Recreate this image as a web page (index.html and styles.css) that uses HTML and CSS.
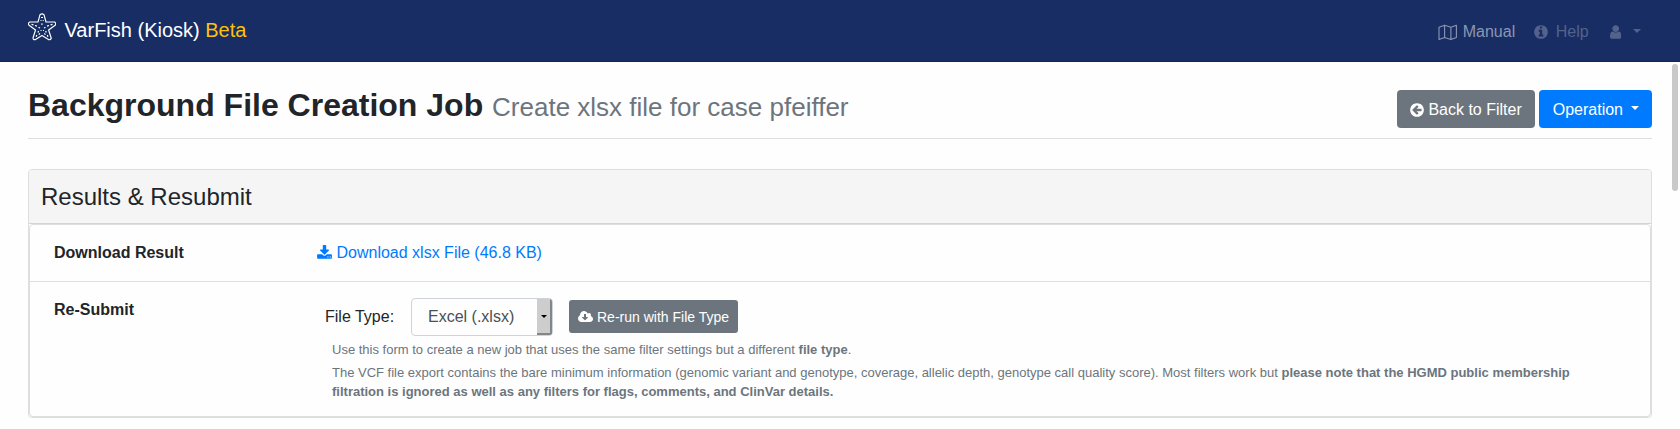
FILE: index.html
```html
<!DOCTYPE html>
<html lang="en">
<head>
<meta charset="utf-8">
<title>VarFish (Kiosk)</title>
<link rel="stylesheet" href="styles.css">
</head>
<body>
<nav class="navbar">
  <a class="brand">
    <svg class="logo" viewBox="0 0 28 28" fill="none" stroke="#fff" stroke-linejoin="round">
      <path stroke-width="1.150" d="M12 1.700q2-1.700 4 0l2 7.300h8.500q2 1.300 .7 3.200l-6.600 4.800 2.700 8.300q-.8 2-2.800 1.300l-6.500-4-6.500 4q-2.300 .5-2.500-1.600l2.500-8-6.500-4.800q-1.400-2 .7-3.200h8.300z"/>
      <path stroke-width="1.200" d="M13 4.500h2M12.500 7.500h1M14.700 7.500h1M3.500 11.300l2 .5M7 12.500l2 .6M24.500 11.300l-2 .5M21 12.500l-2 .6M10.500 14.500l1.500 .4M17.500 14.500l-1.500 .4M12.500 17.500h1M15 17.500h1M10.500 18l-.5 1.500M17.700 18l.5 1.500M8.800 22l-.6 1.800M19.300 22l.6 1.800M12 20.500l-1.300 1M16.200 20.500l1.300 1"/>
      <path stroke-width="1.800" stroke-opacity=".6" d="M13 11.200h1.800"/>
    </svg>
    <span>VarFish (Kiosk) <span class="beta">Beta</span></span>
  </a>
  <div class="menu">
    <a class="menu-item manual">
      <svg class="map" viewBox="0 0 20 17" fill="none" stroke="currentColor" stroke-width="1.100" stroke-linejoin="round"><path d="M1 3.200l5.600-2 6.300 2 5.500-2v12.400l-5.500 2-6.300-2-5.600 2zM6.600 1.200v12.400M12.900 3.200v12.400"/></svg>
      <span>Manual</span>
    </a>
    <a class="menu-item help">
      <svg class="icon icon-round" viewBox="128 0 1536 1792"><path d="M1152 1376v-160q0-14-9-23t-23-9h-96v-512q0-14-9-23t-23-9h-320q-14 0-23 9t-9 23v160q0 14 9 23t23 9h96v320h-96q-14 0-23 9t-9 23v160q0 14 9 23t23 9h448q14 0 23-9t9-23zm-128-896v-160q0-14-9-23t-23-9h-192q-14 0-23 9t-9 23v160q0 14 9 23t23 9h192q14 0 23-9t9-23zm640 416q0 209-103 385.500t-279.500 279.500-385.500 103-385.500-103-279.500-279.500-103-385.500 103-385.500 279.500-279.500 385.500-103 385.500 103 279.500 279.500 103 385.500z"/></svg>
      <span>Help</span>
    </a>
    <a class="menu-item user">
      <svg class="icon icon-user" viewBox="256 0 1280 1792"><path d="M1536 1399q0 109-62.500 187t-150.500 78h-854q-88 0-150.500-78t-62.500-187q0-85 8.500-160.500t31.500-152 58.500-131 94-89 134.500-34.500q131 128 313 128t313-128q76 0 134.500 34.500t94 89 58.500 131 31.500 152 8.500 160.500zm-256-887q0 159-112.500 271.500t-271.500 112.500-271.500-112.500-112.500-271.500 112.500-271.500 271.500-112.500 271.500 112.500 112.500 271.500z"/></svg>
      <span class="caret"></span>
    </a>
  </div>
</nav>
<div class="scroll-thumb"></div>
<main class="content">
  <header class="page-header">
    <h2 class="title">Background File Creation Job <small>Create xlsx file for case pfeiffer</small></h2>
    <div class="actions">
      <a class="btn btn-lower btn-secondary">
        <svg class="icon icon-round" viewBox="128 0 1536 1792"><path d="M1408 960v-128q0-26-19-45t-45-19h-502l189-189q19-19 19-45t-19-45l-91-91q-18-18-45-18t-45 18l-362 362-91 91q-18 18-18 45t18 45l91 91 362 362q18 18 45 18t45-18l91-91q18-18 18-45t-18-45l-189-189h502q26 0 45-19t19-45zm256-64q0 209-103 385.500t-279.500 279.500-385.500 103-385.500-103-279.500-279.500-103-385.500 103-385.500 279.500-279.500 385.500-103 385.500 103 279.500 279.500 103 385.500z"/></svg>
        <span>Back to Filter</span>
      </a>
      <a class="btn btn-lower btn-primary"><span>Operation</span><span class="caret"></span></a>
    </div>
  </header>
  <section class="card">
    <h4 class="card-header">Results &amp; Resubmit</h4>
    <ul class="list">
      <li class="row row-download">
        <strong class="label">Download Result</strong>
        <a class="download">
          <svg class="icon" viewBox="64 0 1664 1792"><path d="M1344 1344q0-26-19-45t-45-19-45 19-19 45 19 45 45 19 45-19 19-45zm256 0q0-26-19-45t-45-19-45 19-19 45 19 45 45 19 45-19 19-45zm128-224v320q0 40-28 68t-68 28h-1472q-40 0-68-28t-28-68v-320q0-40 28-68t68-28h465l135 136q58 56 136 56t136-56l136-136h464q40 0 68 28t28 68zm-325-569q17 41-14 70l-448 448q-18 19-45 19t-45-19l-448-448q-31-29-14-70 17-39 59-39h256v-448q0-26 19-45t45-19h256q26 0 45 19t19 45v448h256q42 0 59 39z"/></svg>
          <span>Download xlsx File (46.8 KB)</span>
        </a>
      </li>
      <li class="row row-resubmit">
        <strong class="label">Re-Submit</strong>
        <div class="form">
          <div class="form-line">
            <span class="form-label">File Type:</span>
            <div class="select"><span class="select-value">Excel (.xlsx)</span><span class="select-button"></span></div>
            <a class="btn btn-secondary btn-sm">
              <svg class="icon" viewBox="-64 0 1920 1792"><path d="M1216 928q0-14-9-23t-23-9h-224v-352q0-13-9.500-22.500t-22.500-9.500h-192q-13 0-22.500 9.500t-9.500 22.500v352h-224q-13 0-22.500 9.500t-9.500 22.500q0 14 9 23l352 352q9 9 23 9t23-9l351-351q10-12 10-24zm640 224q0 159-112.500 271.500t-271.500 112.500h-1088q-185 0-316.500-131.500t-131.500-316.500q0-130 70-240t188-165q-2-30-2-43 0-212 150-362t362-150q156 0 285.500 87t188.500 231q71-62 166-62 106 0 181 75t75 181q0 76-41 138 130 31 213.500 135.500t83.500 238.500z"/></svg>
              <span>Re-run with File Type</span>
            </a>
          </div>
          <p class="hint">Use this form to create a new job that uses the same filter settings but a different <strong>file type</strong>.</p>
          <p class="hint">The VCF file export contains the bare minimum information (genomic variant and genotype, coverage, allelic depth, genotype call quality score). Most filters work but <strong>please note that the HGMD public membership filtration is ignored as well as any filters for flags, comments, and ClinVar details.</strong></p>
        </div>
      </li>
    </ul>
  </section>
</main>
</body>
</html>
```
FILE: styles.css
```css
* { box-sizing: border-box; }
body {
  margin: 0;
  height: 429px;
  overflow: hidden;
  background: #fefefe;
  color: #212529;
  font: 16px/24px "Liberation Sans", Arial, sans-serif;
}
.navbar {
  height: 62px;
  padding: 0 39px 0 28px;
  display: flex;
  justify-content: space-between;
  background: #182d64;
  border-bottom: 1px solid #10235a;
}
.brand { display: flex; gap: 8.500px; padding-top: 13px; color: #fff; font-size: 20px; line-height: 34px; }
.logo { width: 28px; height: 28px; }
.beta { color: #ffc107; }
.menu { display: flex; padding-top: 20px; color: #8c96b2; }
.menu-item { display: flex; align-items: center; height: 24px; }
.manual { gap: 5px; margin-right: 18.500px; }
.map { width: 20px; height: 17px; }
.icon { width: 16px; height: 16px; fill: currentColor; flex: none; }
.icon-round { width: 14px; }
.icon-user { width: 11.400px; }
.help, .user { color: #53628b; }
.help { gap: 8px; margin-right: 21px; }
.user { gap: 12px; }
.caret { border: 4.800px solid transparent; border-top-color: currentColor; border-bottom: 0; margin-bottom: 3px; }
.scroll-thumb { position: absolute; left: 1672px; top: 64px; width: 6px; height: 127px; border-radius: 3px; background: #c9c9c9; }
.content { padding: 0 28px; }
.page-header {
  height: 77px;
  padding-top: 24px;
  display: flex;
  justify-content: space-between;
  border-bottom: 1px solid #dedede;
}
.title { margin: 0; font-size: 32px; line-height: 38px; font-weight: 700; }
.title small { font-size: 26px; font-weight: 400; color: #6c757d; }
.actions { display: flex; gap: 4px; padding-top: 4px; }
.btn { display: flex; align-items: center; height: 38px; padding: 0 13px; border-radius: 4px; color: #fff; white-space: nowrap; }
.btn-secondary { background: #6c757d; gap: 4px; }
.btn-primary { background: #007bff; gap: 8px; padding-left: 14px; }
.btn-lower { padding-top: 2px; }
.btn-lower .caret { margin-bottom: 5px; }
.btn-sm { height: 33px; padding: 0 9px; margin-bottom: 1px; border-radius: 3px; font-size: 14px; }
.btn-sm .icon { width: 15px; height: 14px; }
.card { margin-top: 30px; height: 249px; border: 1px solid #dedede; border-radius: 4px; }
.card-header {
  margin: 0;
  height: 54px;
  padding: 13px 12px;
  border-bottom: 1px solid #d4d4d4;
  border-radius: 3px 3px 0 0;
  background: #f5f5f5;
  font-size: 24px;
  line-height: 28px;
  font-weight: 400;
}
.list { margin: 0; padding: 0; list-style: none; height: 193px; border: 1px solid #dedede; border-radius: 4px; }
.row { display: flex; padding: 0 24px; }
.row-download { height: 57px; padding-top: 16px; border-bottom: 1px solid #dedede; }
.label { width: 263px; flex: none; }
.download { display: flex; gap: 4.500px; color: #007bff; height: 24px; align-items: center; }
.download .icon { width: 15px; }
.row-resubmit { padding-top: 16px; }
.form-line { display: flex; align-items: center; height: 38px; padding-left: 8px; }
.form-label { width: 86px; }
.select {
  display: flex;
  width: 142px;
  height: 38px;
  margin-right: 16px;
  border: 1px solid #ced4da;
  border-radius: 4px;
  overflow: hidden;
  color: #495057;
}
.select-value { flex: 1; padding-left: 16px; line-height: 36px; }
.select-button {
  width: 15px;
  display: flex;
  align-items: center;
  justify-content: center;
  background: #cdcdcd;
  border-right: 2px solid #858585;
  border-bottom: 2px solid #858585;
}
.select-button::after { content: ""; border: 3.500px solid transparent; border-top-color: #000; border-bottom: 0; }
.hint { margin: 4px 24px 0 15px; color: #6c757d; font-size: 13px; line-height: 19px; }
```
